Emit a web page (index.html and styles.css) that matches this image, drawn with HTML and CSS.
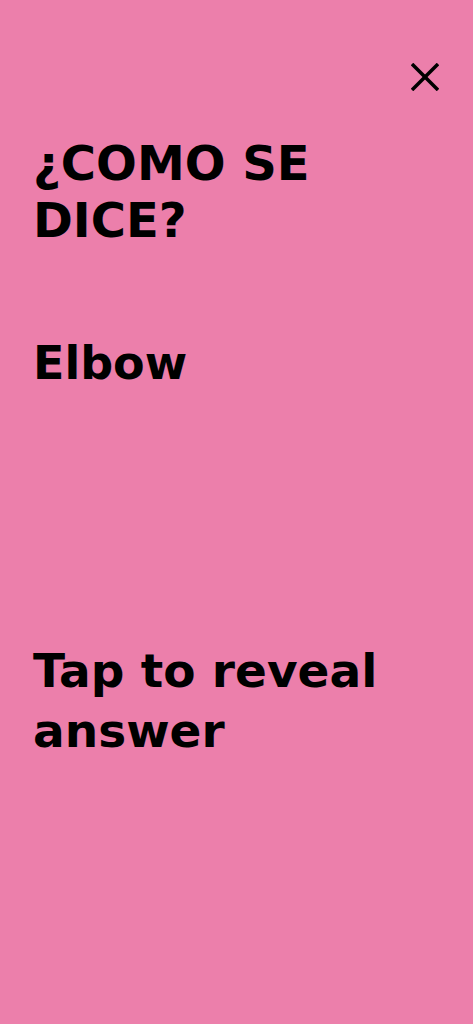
FILE: index.html
```html
<!DOCTYPE html>
<html lang="es">
<head>
    <meta charset="UTF-8">
    <meta name="viewport" content="width=device-width, initial-scale=1.0">
    <title>¿Como se dice?</title>
    <link rel="stylesheet" href="styles.css">
</head>
<body>
    <div class="card">
        <div class="card-top">
            <button class="close-btn" aria-label="Cerrar">
                <svg width="28" height="28" viewBox="0 0 28 28">
                    <line x1="1" y1="1" x2="27" y2="27" />
                    <line x1="27" y1="1" x2="1" y2="27" />
                </svg>
            </button>
        </div>

        <h1 class="card-title">¿COMO SE DICE?</h1>
        <p class="word">Elbow</p>
        <p class="reveal">Tap to reveal answer</p>
    </div>
</body>
</html>
```
FILE: styles.css
```css
html, body { margin: 0; padding: 0; }
body { background-color: #ec7fab; font-family: "DejaVu Sans", sans-serif; color: #000; }
.card { min-height: 1024px; padding: 0 32px 0 33px; box-sizing: border-box; }

.card-top { display: flex; justify-content: flex-end; padding-top: 63px; margin-right: 2px; }
.close-btn { width: 28px; height: 28px; padding: 0; border: none; background: none; cursor: pointer; }
.close-btn svg { display: block; }
.close-btn line { stroke: #000; stroke-width: 3.5; }

.card-title { margin: 44px 0 0; font-size: 48px; line-height: 57px; font-weight: 700; }
.word { margin: 89px 0 0; font-size: 46px; line-height: 50px; font-weight: 700; }
.reveal { margin: 253px 0 0; font-size: 47px; line-height: 60px; font-weight: 700; }
```
